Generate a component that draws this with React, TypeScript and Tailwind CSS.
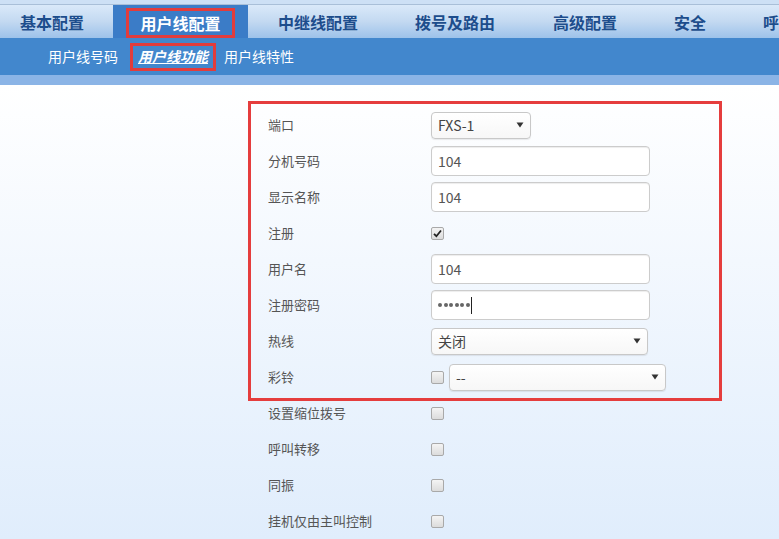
const font = { fontFamily: '"Noto Sans CJK SC", "Noto Sans", sans-serif' };

const topTabs = [
  { label: "基本配置", w: "w-[104px]" },
  { label: "用户线配置", w: "w-[144px]", active: true },
  { label: "中继线配置", w: "w-[140px]" },
  { label: "拨号及路由", w: "w-[134px]" },
  { label: "高级配置", w: "w-[126px]" },
  { label: "安全", w: "w-[84px]" },
];

function Arrow() {
  return (
    <svg width="8" height="6" viewBox="0 0 8 6" className="shrink-0">
      <path d="M0.5 0.5 L7.5 0.5 L4 5.5 Z" fill="#333" />
    </svg>
  );
}

function Select({ value, w }: { value: string; w: string }) {
  return (
    <div
      className={`${w} h-[27px] flex items-center justify-between pl-[6px] pr-[6px] rounded-[4px] border border-[#c8c8c8] bg-linear-to-b from-white to-[#f7f7f7] shadow-[0_1px_1px_rgba(0,0,0,0.08)] text-[14px] text-[#444]`}
    >
      <span>{value}</span>
      <Arrow />
    </div>
  );
}

function Input({ children }: { children: React.ReactNode }) {
  return (
    <div className="w-[219px] h-[30px] flex items-center pl-[6px] rounded-[4px] border border-[#cccccc] bg-white shadow-[inset_0_1px_1px_rgba(0,0,0,0.075)] text-[14px] text-[#555]">
      {children}
    </div>
  );
}

function Check({ checked }: { checked?: boolean }) {
  return (
    <span className="w-[13px] h-[13px] shrink-0 rounded-[2px] border border-[#a9a9a9] bg-linear-to-b from-[#f4f4f4] to-[#dcdcdc] flex items-center justify-center">
      {checked && (
        <svg width="9" height="9" viewBox="0 0 9 9">
          <path d="M1 4.8 L3.4 7.2 L8 1.5" stroke="#222" strokeWidth="1.8" fill="none" />
        </svg>
      )}
    </span>
  );
}

function Row({ label, children }: { label: string; children?: React.ReactNode }) {
  return (
    <div className="h-[36px] flex items-center">
      <div className="w-[163px] text-[13px] text-[#555]">{label}</div>
      <div className="flex items-center gap-[5px]">{children}</div>
    </div>
  );
}

export default function App() {
  return (
    <div
      className="w-[779px] h-[539px] overflow-hidden flex flex-col bg-linear-to-b from-white from-[16%] to-[#e0edfc]"
      style={font}
    >
      {/* top nav */}
      <div className="h-[5px] bg-[#cde0f5] border-b border-[#a9bfd8]" />
      <div className="h-[33px] flex bg-linear-to-b from-[#dae9f9] via-[#c3d9f1] to-[#9dc2ea] whitespace-nowrap">
        {topTabs.map((t) =>
          t.active ? (
            <div key={t.label} className="w-[135px] ml-[9px] bg-[#3b7cc7] flex items-center justify-center">
              <span className="px-[11px] h-[30px] mt-[2px] border-[3px] border-[#e23c3c] flex items-center text-[16px] font-bold text-white">
                {t.label}
              </span>
            </div>
          ) : (
            <div
              key={t.label}
              className={`${t.w} flex items-center justify-center text-[16px] font-bold text-[#1d4d8c]`}
            >
              {t.label}
            </div>
          )
        )}
        <div className="flex-1 flex items-center pl-[31px] text-[16px] font-bold text-[#1d4d8c]">呼</div>
      </div>

      {/* sub nav */}
      <div className="h-[37px] bg-[#4287cd] flex items-center text-[14px] text-white whitespace-nowrap">
        <span className="ml-[48px]">用户线号码</span>
        <span className="ml-[12px] h-[28px] px-[5px] border-[3px] border-[#e23c3c] flex items-center font-bold italic underline">
          用户线功能
        </span>
        <span className="ml-[8px]">用户线特性</span>
      </div>
      <div className="h-[10px] bg-[#8bb4e6]" />

      {/* form */}
      <div className="pl-[248px] pt-[16px]">
        <div className="w-[474px] border-[3px] border-[#e53d3d] pt-[3px] pb-[3px] px-[17px]">
          <Row label="端口">
            <Select value="FXS-1" w="w-[100px]" />
          </Row>
          <Row label="分机号码">
            <Input>104</Input>
          </Row>
          <Row label="显示名称">
            <Input>104</Input>
          </Row>
          <Row label="注册">
            <Check checked />
          </Row>
          <Row label="用户名">
            <Input>104</Input>
          </Row>
          <Row label="注册密码">
            <Input>
              <span className="flex items-center gap-[1.5px]">
                {[0, 1, 2, 3, 4, 5].map((i) => (
                  <span key={i} className="w-[4px] h-[4px] rounded-full bg-[#666]" />
                ))}
              </span>
              <span className="ml-[1px] w-px h-[17px] bg-[#222]" />
            </Input>
          </Row>
          <Row label="热线">
            <Select value="关闭" w="w-[217px]" />
          </Row>
          <Row label="彩铃">
            <Check />
            <Select value="--" w="w-[217px]" />
          </Row>
        </div>
        <div className="-mt-[6px] pl-[20px]">
          <Row label="设置缩位拨号">
            <Check />
          </Row>
          <Row label="呼叫转移">
            <Check />
          </Row>
          <Row label="同振">
            <Check />
          </Row>
          <Row label="挂机仅由主叫控制">
            <Check />
          </Row>
        </div>
      </div>
    </div>
  );
}
